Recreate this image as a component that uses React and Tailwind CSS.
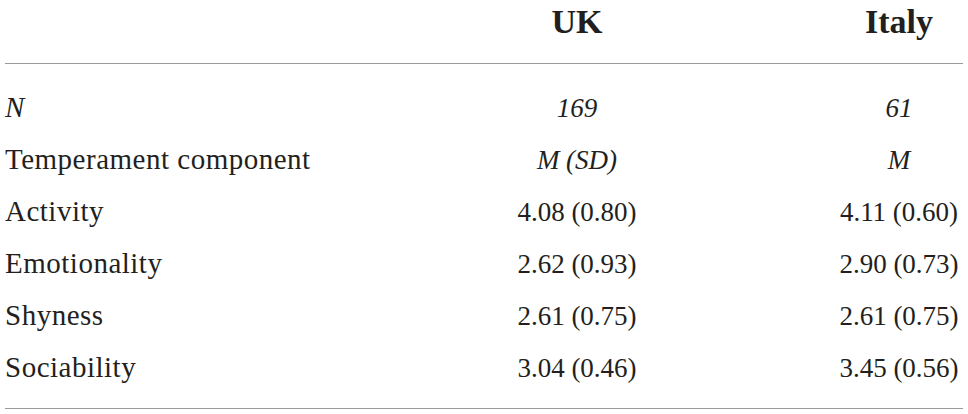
const rows = [
  { label: "N", uk: "169", it: "61", italic: true },
  { label: "Temperament component", uk: "M (SD)", it: "M", italicValues: true },
  { label: "Activity", uk: "4.08 (0.80)", it: "4.11 (0.60)" },
  { label: "Emotionality", uk: "2.62 (0.93)", it: "2.90 (0.73)" },
  { label: "Shyness", uk: "2.61 (0.75)", it: "2.61 (0.75)" },
  { label: "Sociability", uk: "3.04 (0.46)", it: "3.45 (0.56)" },
];

export default function App() {
  return (
    <div
      className="w-[968px] h-[414px] bg-white text-[#231f20] overflow-hidden"
      style={{ fontFamily: "'Liberation Serif', 'Times New Roman', serif" }}
    >
      {/* Column headers */}
      <div className="flex h-[63px] items-center pl-[5px] pb-[20px] font-bold text-[34px]">
        <div className="w-[492px]" />
        <div className="w-[160px] flex justify-center">UK</div>
        <div className="w-[173px]" />
        <div className="w-[138px] flex justify-center">Italy</div>
      </div>

      <div className="mx-[5px] h-px bg-[#9a9a9a]" />

      <div className="pt-[18px] text-[27px]">
        {rows.map((r) => (
          <div key={r.label} className="flex h-[52px] items-center pl-[5px] whitespace-nowrap">
            <div className={`w-[492px] text-[29px] tracking-[0.5px] ${r.italic ? "italic" : ""}`}>
              {r.label}
            </div>
            <div className={`w-[160px] flex justify-center ${r.italic || r.italicValues ? "italic" : ""}`}>
              {r.uk}
            </div>
            <div className="w-[173px]" />
            <div className={`w-[138px] flex justify-center ${r.italic || r.italicValues ? "italic" : ""}`}>
              {r.it}
            </div>
          </div>
        ))}
      </div>

      <div className="mx-[5px] mt-[14px] h-px bg-[#9a9a9a]" />
    </div>
  );
}
